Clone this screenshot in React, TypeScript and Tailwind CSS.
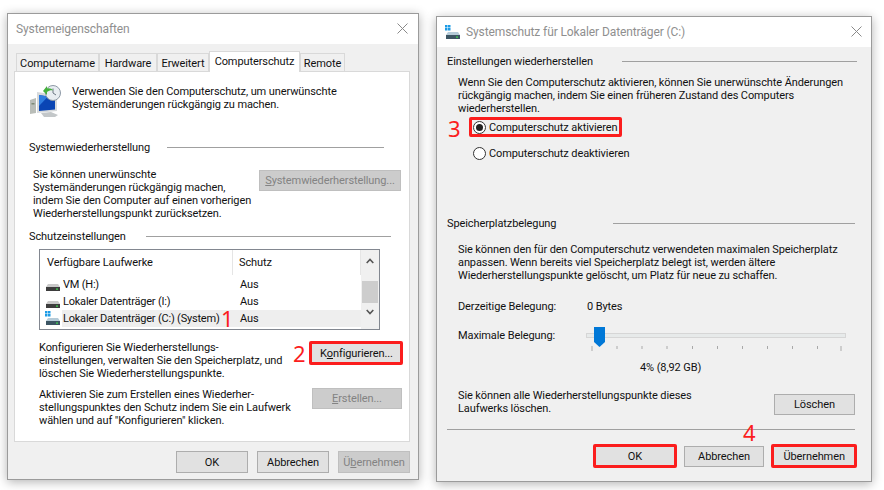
import type { ReactNode } from "react";

const closeIcon = (
  <svg width="11" height="11" viewBox="0 0 11 11" className="mb-[1px] text-[#8a8a8a]">
    <path d="M.5.5l10 10M10.5.5l-10 10" stroke="currentColor" strokeWidth="1" fill="none" />
  </svg>
);

function WinButton({ children, disabled, className = "" }: { children: ReactNode; disabled?: boolean; className?: string }) {
  return (
    <div
      className={`flex items-center justify-center border ${
        disabled ? "bg-[#cccccc] border-[#bfbfbf] text-[#838383]" : "bg-[#e1e1e1] border-[#adadad] text-[#111]"
      } ${className}`}
    >
      <span>{children}</span>
    </div>
  );
}

function GroupLabel({ label, labelWidth, lineRight }: { label: string; labelWidth: string; lineRight: string }) {
  return (
    <div className={`flex h-4 items-center ${lineRight}`}>
      <span className={labelWidth}>{label}</span>
      <div className="h-px flex-1 bg-[#a0a0a0]" />
    </div>
  );
}

function DriveIcon({ system }: { system?: boolean }) {
  return (
    <svg width="16" height="15" viewBox="0 0 16 15" className="shrink-0">
      {system && (
        <g fill="#1c9be6">
          <rect x="0" y="0" width="2.5" height="2.5" />
          <rect x="3" y="0" width="2.5" height="2.5" />
          <rect x="0" y="3" width="2.5" height="2.5" />
          <rect x="3" y="3" width="2.5" height="2.5" />
        </g>
      )}
      <path d="M3 7h10l2 3H1z" fill={system ? "#b5cbd8" : "#c9c9c9"} />
      <rect x="1" y="10" width="14" height="4" fill={system ? "#3c5563" : "#3d3d3d"} />
      <rect x="11" y="11.5" width="2" height="1.2" fill="#3ddc4f" />
    </svg>
  );
}

function RestoreIcon() {
  return (
    <svg width="32" height="33" viewBox="0 0 32 33" className="shrink-0">
      <path d="M0 16l6-2v15l-6 1z" fill="#b9bdb8" />
      <rect x="1.5" y="19" width="3" height="1.5" fill="#7d8a76" />
      <path d="M7 8l20 3v16L7 29z" fill="#d6d9db" />
      <path d="M9 11l16 2.5v12L9 27z" fill="#0a45b4" />
      <path d="M9 11l9 1.5L9 22z" fill="#2f7de0" />
      <path d="M11 29l10-1 7 3-3 2H14z" fill="#c3c7c9" />
      <circle cx="23" cy="9" r="7.5" fill="#e8edf2" stroke="#8d99a6" />
      <path d="M23 4.5V9l3 2" stroke="#6a7683" fill="none" />
      <path d="M13 7l4-5v2.5c3-.5 5 .5 6 2-2-.5-4 0-6 1.5V11z" fill="#45b03c" />
    </svg>
  );
}

function Radio({ checked }: { checked?: boolean }) {
  return (
    <div className="flex size-[13px] shrink-0 items-center justify-center rounded-full border border-[#333] bg-white">
      {checked && <div className="size-[7px] rounded-full bg-[#222]" />}
    </div>
  );
}

function DriveRow({ name, system }: { name: string; system?: boolean }) {
  return (
    <div className="relative flex h-[17px] items-center">
      <div className="flex w-[22px] justify-end pr-[1px]">
        <DriveIcon system={system} />
      </div>
      <div className={`flex h-full w-[300px] items-center ${system ? "bg-[#eeeeee]" : ""}`}>
        <span className="w-[178px] pl-[1px] tracking-[-0.2px]">{name}</span>
        <span>Aus</span>
      </div>
      {system && <span className="absolute left-[181px] top-[-2px] font-['Noto_Sans',sans-serif] text-[22px] leading-[20px] text-[#fb1d1d]">1</span>}
    </div>
  );
}

function Tab({ label, width, active }: { label: string; width: string; active?: boolean }) {
  return active ? (
    <div className={`relative z-10 mb-[-1px] flex h-[21px] items-center justify-center border border-b-0 border-[#d9d9d9] bg-white pb-[2px] ${width}`}>
      {label}
    </div>
  ) : (
    <div className={`flex h-[18px] items-center justify-center border border-b-0 border-[#d9d9d9] bg-[#f0f0f0] pt-[1px] ${width}`}>{label}</div>
  );
}

function LeftWindow() {
  return (
    <div className="mt-[13px] flex h-[467px] w-[412px] shrink-0 flex-col border border-[#9b9b9b] bg-[#f0f0f0] shadow-[0_2px_10px_rgba(0,0,0,0.3)]">
      <div className="flex h-[30px] shrink-0 items-center justify-between bg-white pl-2 pr-[10px]">
        <span className="text-[12px] text-[#8f8f8f]">Systemeigenschaften</span>
        {closeIcon}
      </div>
      <div className="flex h-[27px] items-end pl-2">
        <Tab label="Computername" width="w-[83px]" />
        <Tab label="Hardware" width="w-[58px]" />
        <Tab label="Erweitert" width="w-[52px]" />
        <Tab label="Computerschutz" width="w-[91px]" active />
        <Tab label="Remote" width="w-[45px]" />
      </div>
      <div className="ml-[6px] flex h-[371px] w-[396px] flex-col border border-[#d9d9d9] bg-white pl-[14px]">
        <div className="mt-3 flex h-[32px] gap-[10px] pl-[1px]">
          <RestoreIcon />
          <p className="pt-[1px]">
            Verwenden Sie den Computerschutz, um unerwünschte
            <br />
            Systemänderungen rückgängig zu machen.
          </p>
        </div>
        <div className="mt-[23px]">
          <GroupLabel label="Systemwiederherstellung" labelWidth="w-[138px]" lineRight="mr-[25px]" />
        </div>
        <div className="mt-[13px] flex h-[52px] pl-[4px]">
          <p className="w-[226px]">
            Sie können unerwünschte
            <br />
            Systemänderungen rückgängig machen,
            <br />
            indem Sie den Computer auf einen vorherigen
            <br />
            Wiederherstellungspunkt zurücksetzen.
          </p>
          <WinButton disabled className="mt-[2px] h-[21px] w-[142px]">
            <u>S</u>ystemwiederherstellung...
          </WinButton>
        </div>
        <div className="mt-2">
          <GroupLabel label="Schutzeinstellungen" labelWidth="w-[117px]" lineRight="mr-[18px]" />
        </div>
        <div className="ml-[10px] mt-[5px] flex h-[81px] w-[341px] border border-[#828790]">
          <div className="flex w-[321px] flex-col">
            <div className="flex h-[25px] items-center">
              <span className="w-[193px] border-r border-[#e5e5e5] pl-[7px] pt-[1px] leading-[24px]">Verfügbare Laufwerke</span>
              <span className="w-[128px] border-r border-[#e5e5e5] pl-[6px] pt-[1px] leading-[24px]">Schutz</span>
            </div>
            <div className="mt-[1px]">
              <DriveRow name="VM (H:)" />
              <DriveRow name="Lokaler Datenträger (I:)" />
              <DriveRow name="Lokaler Datenträger (C:) (System)" system />
            </div>
          </div>
          <div className="flex w-[18px] flex-col items-center bg-[#f0f0f0]">
            <svg width="8" height="6" viewBox="0 0 8 6" className="mt-[8px]">
              <path d="M.7 5L4 1.5 7.3 5" stroke="#555" strokeWidth="1.6" fill="none" />
            </svg>
            <div className="ml-[-1px] mt-[17px] h-[22px] w-[16px] bg-[#cdcdcd]" />
            <svg width="8" height="6" viewBox="0 0 8 6" className="mt-[6px]">
              <path d="M.7 1L4 4.5 7.3 1" stroke="#555" strokeWidth="1.6" fill="none" />
            </svg>
          </div>
        </div>
        <div className="ml-[10px] mt-[11px] flex h-[39px]">
          <p className="w-[254px]">
            Konfigurieren Sie Wiederherstellungs-
            <br />
            einstellungen, verwalten Sie den Speicherplatz, und
            <br />
            löschen Sie Wiederherstellungspunkte.
          </p>
          <div className="flex h-[24px] items-center font-['Noto_Sans',sans-serif] text-[22px] leading-[20px] text-[#fb1d1d]">2</div>
          <div className="ml-[4px] h-[24px] w-[94px] rounded-[2px] border-[3px] border-[#fb1d1d]">
            <WinButton className="h-full w-full border-0">
              K<u>o</u>nfigurieren...
            </WinButton>
          </div>
        </div>
        <div className="ml-[10px] mt-2 flex h-[39px]">
          <p className="w-[273px]">
            Aktivieren Sie zum Erstellen eines Wiederher-
            <br />
            stellungspunktes den Schutz indem Sie ein Laufwerk
            <br />
            wählen und auf "Konfigurieren" klicken.
          </p>
          <WinButton disabled className="h-[21px] w-[90px]">
            <u>E</u>rstellen...
          </WinButton>
        </div>
      </div>
      <div className="mt-[9px] flex justify-end gap-[9px] pr-[8px]">
        <WinButton className="h-[22px] w-[72px]">OK</WinButton>
        <WinButton className="h-[22px] w-[72px]">Abbrechen</WinButton>
        <WinButton disabled className="h-[22px] w-[72px]">
          Ü<u>b</u>ernehmen
        </WinButton>
      </div>
    </div>
  );
}

const ticks = [591.5, 616.5, 641.5, 666.5, 692, 717, 742, 767, 792, 817, 840.5];

function Slider() {
  return (
    <div className="relative h-6 w-[260px]">
      <div className="absolute left-0 top-[6px] h-[5px] w-[260px] border border-[#d6d6d6] bg-[#e7eaea]" />
      <svg width="11" height="20" viewBox="0 0 11 20" className="absolute left-[8px] top-0">
        <path d="M0 0h11v15l-5.5 5L0 15z" fill="#0078d7" />
      </svg>
      <svg width="260" height="6" viewBox="0 0 260 6" className="absolute left-0 top-[19px]">
        {ticks.map((t) => (
          <rect key={t} x={t - 586} y="0" width="1" height={t === 591.5 || t === 840.5 ? 5 : 3} fill="#a9a9a9" />
        ))}
      </svg>
    </div>
  );
}

function RightWindow() {
  return (
    <div className="ml-[17px] mt-4 flex h-[466px] w-[436px] shrink-0 flex-col border border-[#9b9b9b] bg-[#f0f0f0] shadow-[0_2px_10px_rgba(0,0,0,0.3)]">
      <div className="flex h-[30px] shrink-0 items-center bg-white pl-2 pr-[9px]">
        <DriveIcon system />
        <span className="ml-[5px] flex-1 text-[12px] text-[#8f8f8f]">Systemschutz für Lokaler Datenträger (C:)</span>
        {closeIcon}
      </div>
      <div className="flex flex-col pl-[10px] pr-[14px]">
        <div className="mt-[6px]">
          <GroupLabel label="Einstellungen wiederherstellen" labelWidth="w-[175px]" lineRight="mr-0" />
        </div>
        <p className="ml-[11px] mt-[7px]">
          Wenn Sie den Computerschutz aktivieren, können Sie unerwünschte Änderungen
          <br />
          rückgängig machen, indem Sie einen früheren Zustand des Computers
          <br />
          wiederherstellen.
        </p>
        <div className="mt-[2px] flex h-5 items-center">
          <span className="w-[22px] pl-[1px] pt-[1px] font-['Noto_Sans',sans-serif] text-[22px] leading-[20px] text-[#fb1d1d]">3</span>
          <div className="flex h-5 w-[153px] items-center gap-[3px] rounded-[2px] border-[3px] border-[#fb1d1d] pl-[1px]">
            <Radio checked />
            <span>Computerschutz aktivieren</span>
          </div>
        </div>
        <div className="ml-[26px] mt-[6px] flex h-5 items-center gap-[3px]">
          <Radio />
          <span>Computerschutz deaktivieren</span>
        </div>
        <div className="mt-[52px]">
          <GroupLabel label="Speicherplatzbelegung" labelWidth="w-[166px]" lineRight="mr-[2px]" />
        </div>
        <p className="ml-[11px] mt-3">
          Sie können den für den Computerschutz verwendeten maximalen Speicherplatz
          <br />
          anpassen. Wenn bereits viel Speicherplatz belegt ist, werden ältere
          <br />
          Wiederherstellungspunkte gelöscht, um Platz für neue zu schaffen.
        </p>
        <div className="ml-[11px] mt-[18px] flex">
          <span className="w-[129px]">Derzeitige Belegung:</span>
          <span>0 Bytes</span>
        </div>
        <div className="ml-[11px] mt-[14px] flex">
          <span className="mt-[2px] w-[128px]">Maximale Belegung:</span>
          <Slider />
        </div>
        <div className="ml-[193px] mt-[10px]">4% (8,92 GB)</div>
        <div className="ml-[11px] mt-[15px] flex justify-between pr-[2px]">
          <p>
            Sie können alle Wiederherstellungspunkte dieses
            <br />
            Laufwerks löschen.
          </p>
          <WinButton className="mt-[5px] h-[21px] w-[81px]">Löschen</WinButton>
        </div>
        <div className="relative mr-[2px] mt-[14px] h-px bg-[#a0a0a0]">
          <span className="absolute left-[296px] top-[-7px] font-['Noto_Sans',sans-serif] text-[22px] leading-[20px] text-[#fb1d1d]">4</span>
        </div>
        <div className="mt-[14px] flex h-6 items-center">
          <div className="ml-[146px] h-[24px] w-[84px] rounded-[2px] border-[3px] border-[#fb1d1d]">
            <WinButton className="h-full w-full border-0">OK</WinButton>
          </div>
          <WinButton className="ml-[7px] h-[21px] w-[81px]">Abbrechen</WinButton>
          <div className="ml-[7px] h-[24px] w-[86px] rounded-[2px] border-[3px] border-[#fb1d1d]">
            <WinButton className="h-full w-full border-0">Übernehmen</WinButton>
          </div>
        </div>
      </div>
    </div>
  );
}

export default function App() {
  return (
    <div className="flex h-[490px] w-[884px] items-start overflow-hidden whitespace-nowrap bg-white pl-[7px] font-['Roboto',sans-serif] text-[11px] leading-[13px] tracking-[-0.1px] text-[#111]">
      <LeftWindow />
      <RightWindow />
    </div>
  );
}
